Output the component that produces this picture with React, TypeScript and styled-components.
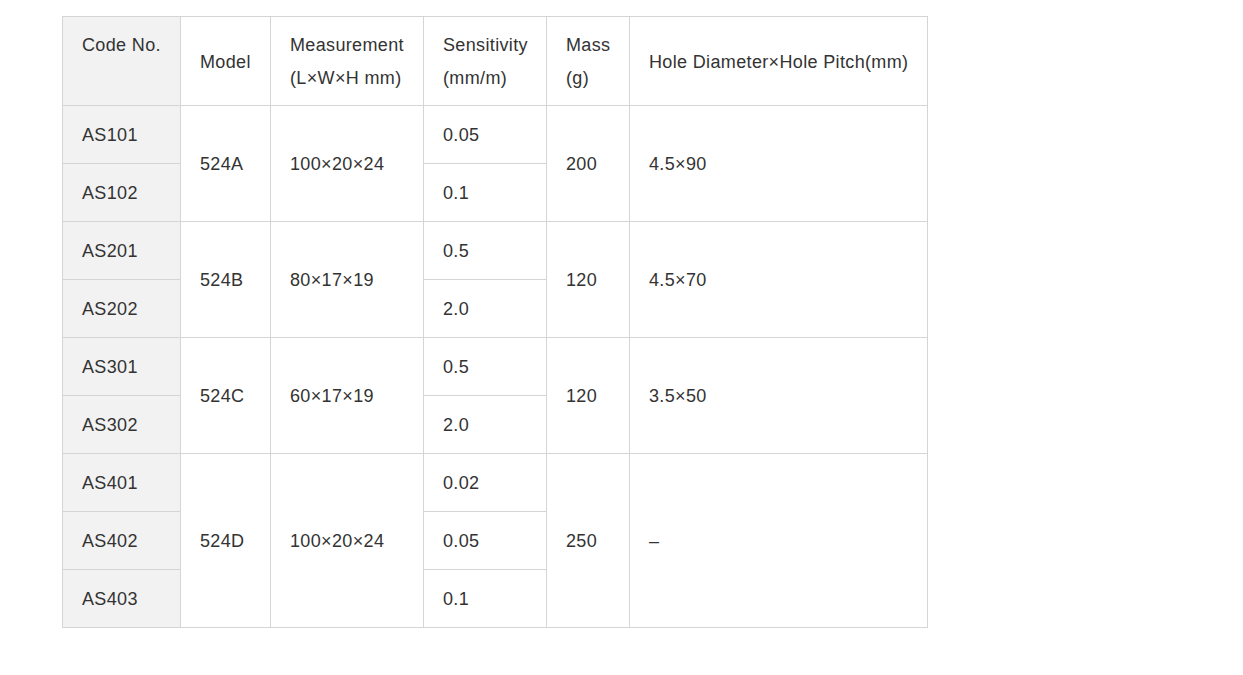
import React from "react";
import styled, { createGlobalStyle } from "styled-components";

const Global = createGlobalStyle`
  html, body { margin: 0; padding: 0; background: #fff; }
  body { font-family: "Liberation Sans", Arial, sans-serif; }
`;

const Page = styled.div`
  padding: 16px 0 0 62px;
`;

const Table = styled.table`
  border-collapse: collapse;
  table-layout: fixed;
  width: 865px;
  font-family: "Liberation Sans", Arial, sans-serif;
  font-size: 18px;
  letter-spacing: 0.35px;
  line-height: 33px;
  color: #333;
`;

const HeadCell = styled.th<{ $top?: boolean; $code?: boolean }>`
  border: 1px solid #d5d5d5;
  padding: 12px 19px 10px;
  font-weight: normal;
  text-align: left;
  vertical-align: ${(p) => (p.$top ? "top" : "middle")};
  background: ${(p) => (p.$code ? "#f2f2f2" : "#fff")};
  height: 66px;
  white-space: nowrap;
`;

const Cell = styled.td<{ $code?: boolean }>`
  border: 1px solid #d5d5d5;
  padding: 13px 19px 11px;
  text-align: left;
  vertical-align: middle;
  background: ${(p) => (p.$code ? "#f2f2f2" : "#fff")};
  height: 33px;
  white-space: nowrap;
`;

type Group = {
  model: string;
  size: string;
  mass: string;
  hole: string;
  items: { code: string; sens: string }[];
};

const groups: Group[] = [
  { model: "524A", size: "100×20×24", mass: "200", hole: "4.5×90", items: [ { code: "AS101", sens: "0.05" }, { code: "AS102", sens: "0.1" } ] },
  { model: "524B", size: "80×17×19", mass: "120", hole: "4.5×70", items: [ { code: "AS201", sens: "0.5" }, { code: "AS202", sens: "2.0" } ] },
  { model: "524C", size: "60×17×19", mass: "120", hole: "3.5×50", items: [ { code: "AS301", sens: "0.5" }, { code: "AS302", sens: "2.0" } ] },
  { model: "524D", size: "100×20×24", mass: "250", hole: "–", items: [ { code: "AS401", sens: "0.02" }, { code: "AS402", sens: "0.05" }, { code: "AS403", sens: "0.1" } ] },
];

export default function App() {
  return (
    <>
      <Global />
      <Page>
        <Table>
          <colgroup>
            <col style={{ width: 118 }} />
            <col style={{ width: 90 }} />
            <col style={{ width: 153 }} />
            <col style={{ width: 123 }} />
            <col style={{ width: 83 }} />
            <col style={{ width: 298 }} />
          </colgroup>
          <thead>
            <tr>
              <HeadCell $top $code>Code No.</HeadCell>
              <HeadCell>Model</HeadCell>
              <HeadCell>Measurement<br />(L×W×H mm)</HeadCell>
              <HeadCell>Sensitivity<br />(mm/m)</HeadCell>
              <HeadCell>Mass<br />(g)</HeadCell>
              <HeadCell>Hole Diameter×Hole Pitch(mm)</HeadCell>
            </tr>
          </thead>
          <tbody>
            {groups.map((g) =>
              g.items.map((it, i) => (
                <tr key={it.code}>
                  <Cell $code>{it.code}</Cell>
                  {i === 0 && <Cell rowSpan={g.items.length}>{g.model}</Cell>}
                  {i === 0 && <Cell rowSpan={g.items.length}>{g.size}</Cell>}
                  <Cell>{it.sens}</Cell>
                  {i === 0 && <Cell rowSpan={g.items.length}>{g.mass}</Cell>}
                  {i === 0 && <Cell rowSpan={g.items.length}>{g.hole}</Cell>}
                </tr>
              ))
            )}
          </tbody>
        </Table>
      </Page>
    </>
  );
}
